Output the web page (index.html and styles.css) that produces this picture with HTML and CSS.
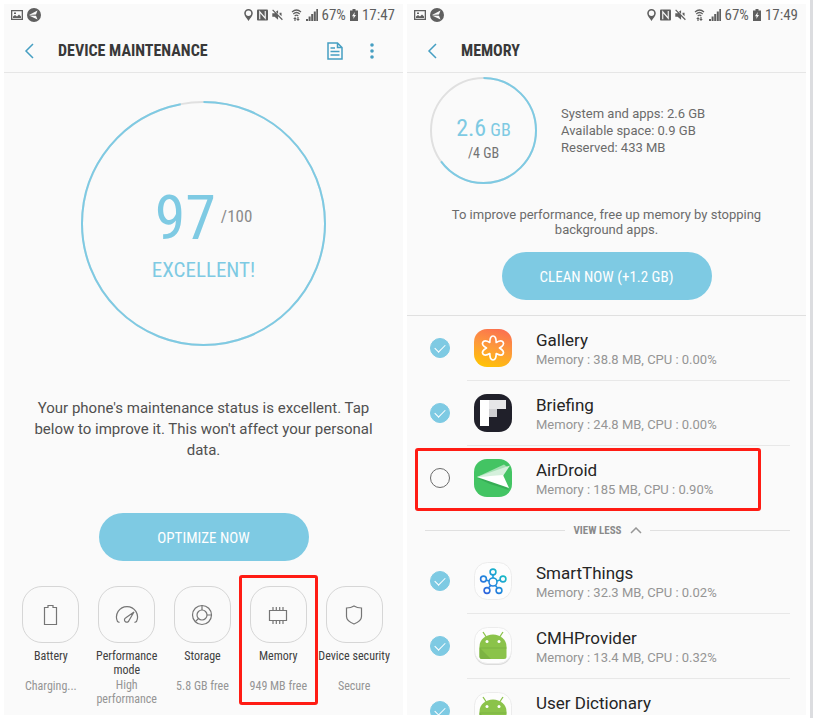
FILE: index.html
```html
<!DOCTYPE html>
<html lang="en">
<head>
    <meta charset="UTF-8">
    <title>Device maintenance</title>
    <link rel="stylesheet" href="styles.css">
</head>
<body>

<!-- shared icons -->
<svg class="sprite" aria-hidden="true">
    <symbol id="i-picture" viewBox="0 0 12 10">
        <path fill-rule="evenodd" d="M0 0h12v10H0z M1.300 1.300v7.400h9.400V1.300z"/>
        <path d="M2 8V6.500l2-1.500 2 1.500 2-2 2 2V8z"/>
        <path d="M3 2.500h2v1.500H3z"/>
    </symbol>
    <symbol id="i-send" viewBox="0 0 14 14">
        <circle cx="7" cy="7" r="7"/>
        <path d="M2 7l8.500-4.500L9 6.500z M2 7.500l7 .3 1.500 3.700z" fill="#fafafa"/>
    </symbol>
    <symbol id="i-pin" viewBox="0 0 9 12">
        <path fill-rule="evenodd" d="M4.500 0a4.300 4.300 0 0 1 4.300 4.300C8.800 7 6 9.500 4.500 12 3 9.500.2 7 .2 4.300A4.300 4.300 0 0 1 4.500 0z M4.500 1.600a2.700 2.700 0 1 0 0 5.400 2.700 2.700 0 0 0 0-5.400z"/>
    </symbol>
    <symbol id="i-nfc" viewBox="0 0 12 12">
        <rect width="12" height="12" rx="1"/>
        <path d="M3 10.500V2.500l6 7V1.500" fill="none" stroke="#fafafa" stroke-width="1.200"/>
    </symbol>
    <symbol id="i-mute" viewBox="2.500 2.500 19 19">
        <path d="M4.300 2.500L2.800 4 7.700 9H3v6h4l6 5v-5.700L19.700 21 21.200 19.500z M13 4L9.200 6.400 13 10.200z M15.500 8h3.500v6l-3.500-3.500z"/>
    </symbol>
    <symbol id="i-wifi" viewBox="0 0 11 12">
        <path d="M1 3q4.500-4 9 0 M2.300 5q3.200-3 6.400 0 M3.700 7q1.800-1.600 3.600 0" fill="none" stroke="#5f5f5f" stroke-width="1.200"/>
        <path d="M4 8l1.800 2H4.600v2H3.400v-2H2.200z M7 12L5.200 10h1.200V8h1.200v2h1.200z"/>
    </symbol>
    <symbol id="i-signal" viewBox="0 0 12 12">
        <path d="M0 10h2v2H0z M2.600 7.500h2V12h-2z M5.200 5h2v7h-2z M7.800 2.500h2V12h-2z M10.300 0H12v12h-1.700z"/>
    </symbol>
    <symbol id="i-charge" viewBox="0 0 8 12">
        <path d="M2.500 0h3v1.500H8V12H0V1.500h2.500z"/>
        <path d="M4.800 3L2 7.200h1.700L3.200 10 6 6H4.300z" fill="#fafafa"/>
    </symbol>
    <symbol id="i-back" viewBox="0 0 10 16">
        <path d="M9 1L2 8l7 7" fill="none" stroke="#469fc2" stroke-width="1.500"/>
    </symbol>
    <symbol id="i-android" viewBox="0 0 38 38">
        <rect x=".5" y="1.500" width="37" height="36.500" rx="13" fill="#dcdcdc"/>
        <rect x=".5" y=".5" width="37" height="36" rx="13" fill="#fdfdfd" stroke="#ececec"/>
        <path d="M9 5l4 6 M29 5l-4 6" stroke="#8bc34a" stroke-width="1.300"/>
        <path d="M5.500 19.500a13.500 12 0 0 1 27 0v10q0 2.500-2.500 2.500H8q-2.500 0-2.500-2.500z" fill="#8bc34a"/>
        <path d="M5.500 20.500h27v1h-27z M5.500 20.500L17 32H8q-2.500 0-2.500-2z" fill="#7cb342"/>
        <circle cx="13" cy="14.500" r="1.500" fill="#fff"/>
        <circle cx="25" cy="14.500" r="1.500" fill="#fff"/>
    </symbol>
</svg>

<main class="screens">
    <section class="screen">
        <div class="status">
            <svg class="ico-picture"><use href="#i-picture"/></svg>
            <svg class="ico-send"><use href="#i-send"/></svg>
            <span class="space"></span>
            <svg class="ico-pin"><use href="#i-pin"/></svg>
            <svg class="ico-small"><use href="#i-nfc"/></svg>
            <svg class="ico-small ico-mute"><use href="#i-mute"/></svg>
            <svg class="ico-small"><use href="#i-wifi"/></svg>
            <svg class="ico-signal"><use href="#i-signal"/></svg>
            <span>67%</span>
            <svg class="ico-charge"><use href="#i-charge"/></svg>
            <span>17:47</span>
        </div>
        <header class="bar">
            <button class="icon-btn" aria-label="Back"><svg class="ico-back"><use href="#i-back"/></svg></button>
            <h1>DEVICE MAINTENANCE</h1>
            <button class="icon-btn" aria-label="Report">
                <svg width="16" height="18" viewBox="0 0 16 18" fill="none" stroke="#469fc2" stroke-width="1.500">
                    <path d="M1 1h9.500L15 5.500V17H1z M10.500 1v4.500H15 M3.500 6H8 M3.500 9.500h9 M3.500 13h9"/>
                </svg>
            </button>
            <button class="icon-btn" aria-label="More options">
                <svg width="4" height="16" viewBox="0 0 4 16" fill="#469fc2">
                    <circle cx="2" cy="2" r="1.800"/><circle cx="2" cy="8" r="1.800"/><circle cx="2" cy="14" r="1.800"/>
                </svg>
            </button>
        </header>

        <div class="ring ring-big">
            <svg viewBox="0 0 245 245">
                <circle class="track" cx="122.500" cy="122.500" r="121.500"/>
                <circle class="value" cx="122.500" cy="122.500" r="121.500" pathLength="100" stroke-dasharray="97 3"/>
            </svg>
            <div class="ring-text">
                <div class="score"><span class="score-num">97</span><span class="score-max">/100</span></div>
                <div class="score-word">EXCELLENT!</div>
            </div>
        </div>

        <p class="message">Your phone's maintenance status is excellent. Tap below to improve it. This won't affect your personal data.</p>
        <button class="pill">OPTIMIZE NOW</button>

        <nav class="tiles">
            <a class="tile" href="#battery">
                <span class="tile-icon">
                    <svg viewBox="0 0 24 24"><path d="M5.500 4.500H9v-2h5v2h3.500v17h-12z"/></svg>
                </span>
                <span class="tile-name">Battery</span>
                <span class="tile-info">Charging...</span>
            </a>
            <a class="tile" href="#performance">
                <span class="tile-icon">
                    <svg viewBox="0 0 24 24"><path d="M4.500 19.500L2.500 18.500A10.500 10.500 0 1 1 21.500 18.500L19.500 19.500 M19 9l-5 8.500a2.300 2.300 0 1 1-3.500-2.500z"/></svg>
                </span>
                <span class="tile-name">Performance mode</span>
                <span class="tile-info">High performance</span>
            </a>
            <a class="tile" href="#storage">
                <span class="tile-icon">
                    <svg viewBox="0 0 24 24"><circle cx="12" cy="12" r="9.500"/><circle cx="12" cy="12" r="5"/><path d="M12 2.500V7 M17 12h4.500 M8.500 15.500L5.300 18.700"/></svg>
                </span>
                <span class="tile-name">Storage</span>
                <span class="tile-info">5.8 GB free</span>
            </a>
            <a class="tile marked" href="#memory">
                <span class="tile-icon">
                    <svg viewBox="0 0 24 24"><path d="M3.500 7.500h17v10h-17z M7 4v3.500 M10.300 4v3.500 M13.700 4v3.500 M17 4v3.500 M7 17.500V21 M10.300 17.500V21 M13.700 17.500V21 M17 17.500V21"/></svg>
                </span>
                <span class="tile-name">Memory</span>
                <span class="tile-info">949 MB free</span>
            </a>
            <a class="tile" href="#security">
                <span class="tile-icon">
                    <svg viewBox="0 0 24 24"><path d="M12 3q3 2 7.500 2v8.500q0 4.500-7.500 7.500-7.500-3-7.500-7.500V5Q9 5 12 3z"/></svg>
                </span>
                <span class="tile-name">Device security</span>
                <span class="tile-info">Secure</span>
            </a>
        </nav>
    </section>

    <section class="screen">
        <div class="status">
            <svg class="ico-picture"><use href="#i-picture"/></svg>
            <svg class="ico-send"><use href="#i-send"/></svg>
            <span class="space"></span>
            <svg class="ico-pin"><use href="#i-pin"/></svg>
            <svg class="ico-small"><use href="#i-nfc"/></svg>
            <svg class="ico-small ico-mute"><use href="#i-mute"/></svg>
            <svg class="ico-small"><use href="#i-wifi"/></svg>
            <svg class="ico-signal"><use href="#i-signal"/></svg>
            <span>67%</span>
            <svg class="ico-charge"><use href="#i-charge"/></svg>
            <span>17:49</span>
        </div>
        <header class="bar">
            <button class="icon-btn" aria-label="Back"><svg class="ico-back"><use href="#i-back"/></svg></button>
            <h1>MEMORY</h1>
        </header>

        <div class="summary">
            <div class="ring ring-small">
                <svg viewBox="0 0 107 107">
                    <circle class="track" cx="53.500" cy="53.500" r="52.500"/>
                    <circle class="value" cx="53.500" cy="53.500" r="52.500" pathLength="100" stroke-dasharray="65 35"/>
                </svg>
                <div class="ring-text">
                    <div class="used"><span class="used-num">2.6</span> GB</div>
                    <div class="total">/4 GB</div>
                </div>
            </div>
            <ul class="stats">
                <li>System and apps: 2.6 GB</li>
                <li>Available space: 0.9 GB</li>
                <li>Reserved: 433 MB</li>
            </ul>
        </div>
        <p class="hint">To improve performance, free up memory by stopping background apps.</p>
        <button class="pill">CLEAN NOW (+1.2 GB)</button>

        <div class="apps">
            <label class="app">
                <input type="checkbox" checked>
                <svg class="app-icon" viewBox="0 0 38 38">
                    <defs>
                        <linearGradient id="g-gallery" x1=".7" y1="0" x2=".4" y2="1">
                            <stop offset="0" stop-color="#fb7050"/><stop offset=".5" stop-color="#fd9a3a"/><stop offset="1" stop-color="#ffc107"/>
                        </linearGradient>
                    </defs>
                    <rect width="38" height="38" rx="13" fill="url(#g-gallery)"/>
                    <path fill="none" stroke="#fff" stroke-width="1.700" stroke-linejoin="round" d="M15.800 13.400C15.800 9.500 17 7 19 7S22.200 9.500 22.200 13.400C25.600 11.400 28.200 11.500 29.200 13.200S28.900 17 25.500 19C28.900 21 30.200 23.100 29.200 24.800S25.600 26.600 22.200 24.600C22.200 28.500 21 31 19 31S15.800 28.500 15.800 24.600C12.400 26.600 9.800 26.500 8.800 24.800S9.100 21 12.500 19C9.100 17 7.800 14.900 8.800 13.200S12.400 11.400 15.800 13.400z"/>
                </svg>
                <span class="app-text"><span class="app-name">Gallery</span><span class="app-info">Memory : 38.8 MB, CPU : 0.00%</span></span>
            </label>
            <label class="app">
                <input type="checkbox" checked>
                <svg class="app-icon" viewBox="0 0 38 38">
                    <rect width="38" height="38" rx="13" fill="#20202a"/>
                    <path d="M6 6h9v26H6z" fill="#fff"/>
                    <path d="M15 6h17v9H15z" fill="#e6e6e8"/>
                    <path d="M15 15h8v8h-8z" fill="#cfcfd2"/>
                </svg>
                <span class="app-text"><span class="app-name">Briefing</span><span class="app-info">Memory : 24.8 MB, CPU : 0.00%</span></span>
            </label>
            <label class="app marked">
                <input type="checkbox">
                <svg class="app-icon" viewBox="0 0 38 38">
                    <rect width="38" height="38" rx="13" fill="#43c463"/>
                    <path d="M3 19l13 6 19 6-7-8z" fill="#37ad55"/>
                    <path d="M3 18L30 5.500l4 3L28 17z" fill="#a5e0b4"/>
                    <path d="M3 18L36 6.500 29 17z" fill="#d5f0dc"/>
                    <path d="M3 18l26-2 6 13z" fill="#fff"/>
                </svg>
                <span class="app-text"><span class="app-name">AirDroid</span><span class="app-info">Memory : 185 MB, CPU : 0.90%</span></span>
            </label>

            <button class="less">
                <span>VIEW LESS</span>
                <svg width="12" height="7" viewBox="0 0 12 7" fill="none" stroke="#979797" stroke-width="1.500"><path d="M1 6l5-5 5 5"/></svg>
            </button>

            <label class="app">
                <input type="checkbox" checked>
                <svg class="app-icon" viewBox="0 0 38 38">
                    <defs>
                        <linearGradient id="g-things" gradientUnits="userSpaceOnUse" x1="10" y1="30" x2="30" y2="10">
                            <stop offset="0" stop-color="#2f62dd"/><stop offset=".5" stop-color="#1e8fdc"/><stop offset="1" stop-color="#17c3c0"/>
                        </linearGradient>
                    </defs>
                    <rect x=".5" y=".5" width="37" height="37" rx="13" fill="#fdfdfd" stroke="#ececec"/>
                    <g fill="none" stroke="url(#g-things)" stroke-width="1.600">
                        <circle cx="19" cy="20" r="4"/>
                        <circle cx="19" cy="10" r="2.900"/>
                        <circle cx="29" cy="17" r="2.900"/>
                        <circle cx="25" cy="28.500" r="2.900"/>
                        <circle cx="13" cy="28.500" r="2.900"/>
                        <circle cx="9.500" cy="17" r="2.900"/>
                        <path d="M19 13v3 M23 19l3-1 M21.500 23.500l1.500 2 M16.500 23.500l-1.500 2 M15 19l-3-1"/>
                    </g>
                </svg>
                <span class="app-text"><span class="app-name">SmartThings</span><span class="app-info">Memory : 32.3 MB, CPU : 0.02%</span></span>
            </label>
            <label class="app">
                <input type="checkbox" checked>
                <svg class="app-icon"><use href="#i-android"/></svg>
                <span class="app-text"><span class="app-name">CMHProvider</span><span class="app-info">Memory : 13.4 MB, CPU : 0.32%</span></span>
            </label>
            <label class="app">
                <input type="checkbox" checked>
                <svg class="app-icon"><use href="#i-android"/></svg>
                <span class="app-text"><span class="app-name">User Dictionary</span></span>
            </label>
        </div>
    </section>
</main>
</body>
</html>
```
FILE: styles.css
```css
* {
    margin: 0;
    padding: 0;
    box-sizing: border-box;
}
body {
    background: #ffffff;
    color: #505050;
    font-family: Roboto, "Liberation Sans", sans-serif;
    font-size: 13px;
}
button {
    border: none;
    background: none;
    font: inherit;
    color: inherit;
    cursor: pointer;
}
a {
    color: inherit;
    text-decoration: none;
}
ul {
    list-style: none;
}
.sprite {
    display: none;
}

/* two phones side by side */
.screens {
    display: grid;
    grid-template-columns: 1fr 1fr;
    gap: 4px;
    height: 100vh;
    padding: 4px 4px 3px;
    border-right: 3px solid #dcdde0;
}
.screen {
    display: flex;
    flex-direction: column;
    min-width: 0;
    overflow: hidden;
    background: #fafafa;
}

/* condensed texts */
.status,
.bar,
.ring,
.pill,
.tiles,
.less {
    font-family: "Roboto Condensed", "Liberation Sans Narrow", "Liberation Sans", sans-serif;
}

/* status bar */
.status {
    display: flex;
    flex: none;
    align-items: center;
    gap: 4px;
    height: 22px;
    padding: 0 8px 0 7px;
    font-size: 15px;
    color: #5f5f5f;
    fill: #5f5f5f;
}
.space {
    flex: 1;
}
.ico-picture {
    width: 12px;
    height: 10px;
}
.ico-send {
    width: 14px;
    height: 14px;
}
.ico-pin {
    width: 9px;
    height: 12px;
}
.ico-small {
    width: 11px;
    height: 12px;
}
.ico-signal {
    width: 12px;
    height: 12px;
}
.ico-mute {
    margin-right: 4px;
}
.ico-charge {
    width: 8px;
    height: 12px;
}

/* title bar */
.bar {
    display: flex;
    flex: none;
    align-items: center;
    height: 47px;
    padding: 3px 17px 0 11px;
    border-bottom: 1px solid #e6e6e6;
}
.bar h1 {
    flex: 1;
    padding-left: 15px;
    font-size: 16px;
    font-weight: bold;
    color: #383838;
}
.icon-btn {
    display: flex;
    align-items: center;
    justify-content: center;
    width: 28px;
    height: 36px;
}
.icon-btn + .icon-btn {
    margin-left: 9px;
}
.ico-back {
    width: 10px;
    height: 16px;
}

/* rings */
.ring {
    position: relative;
    flex: none;
}
.ring svg {
    display: block;
    transform: rotate(-90deg);
}
.ring circle {
    fill: none;
    stroke-width: 2;
}
.track {
    stroke: #e0e0e0;
}
.value {
    stroke: #7ecae3;
}
.ring-text {
    position: absolute;
    inset: 0;
    text-align: center;
    color: #7ecae3;
}
.ring-big {
    width: 245px;
    margin: 28px auto 0;
}
.ring-big .ring-text {
    padding-top: 82px;
}
.score {
    display: flex;
    justify-content: center;
    gap: 5px;
}
.score-num {
    font-size: 62px;
    line-height: 70px;
}
.score-max {
    padding-top: 22px;
    font-size: 17px;
    line-height: 22px;
    color: #8a8a8a;
}
.score-word {
    padding-top: 5px;
    font-size: 21px;
    line-height: 24px;
}
.ring-small {
    width: 107px;
}
.ring-small .ring-text {
    padding-top: 37px;
}
.used {
    font-size: 18px;
    line-height: 28px;
}
.used-num {
    font-size: 24px;
}
.total {
    font-size: 14px;
    line-height: 18px;
    color: #737373;
}

.message {
    padding: 52px 30px 0;
    font-size: 15px;
    line-height: 21px;
    text-align: center;
}
.pill {
    flex: none;
    width: 210px;
    height: 48px;
    margin: 52px auto 0;
    padding-top: 2px;
    border-radius: 24px;
    background: #7ecae3;
    color: #ffffff;
    font-size: 15px;
}

/* tiles */
.tiles {
    display: grid;
    grid-template-columns: repeat(5, 1fr);
    padding: 25px 11px 0 9px;
    font-size: 12px;
    line-height: 14px;
    text-align: center;
}
.tile {
    position: relative;
    display: flex;
    flex-direction: column;
    align-items: center;
    min-width: 0;
    height: 120px;
}
.tile-icon {
    display: flex;
    flex: none;
    align-items: center;
    justify-content: center;
    width: 57px;
    height: 57px;
    margin-bottom: 6px;
    border: 1px solid #d6d6d6;
    border-radius: 20px;
}
.tile-icon svg {
    width: 24px;
    height: 24px;
    fill: none;
    stroke: #757575;
    stroke-width: 1.2;
}
.tile-name {
    height: 30px;
    color: #404040;
}
.tile-info {
    color: #959595;
}
.tile:last-child .tile-name {
    white-space: nowrap;
}
.marked::after {
    content: '';
    position: absolute;
    border: 3px solid #ff1c14;
    border-radius: 3px;
}
.tile.marked::after {
    inset: -11px -2px 1px -1px;
}

/* memory screen */
.summary {
    display: flex;
    flex: none;
    gap: 24px;
    padding: 4px 23px 0;
}
.stats {
    padding-top: 28px;
    line-height: 17px;
    color: #6b6b6b;
}
.hint {
    padding: 23px 44px 0;
    line-height: 15px;
    text-align: center;
    color: #6b6b6b;
}
.hint + .pill {
    margin-top: 15px;
}
.apps {
    margin-top: 15px;
    border-top: 1px solid #e0e0e0;
}
.app {
    position: relative;
    display: grid;
    grid-template-columns: 20px 38px 1fr;
    align-items: center;
    height: 65px;
    padding: 0 0 2px 23px;
    column-gap: 24px;
    background: linear-gradient(#e8e8e8, #e8e8e8) no-repeat 60px 100% / calc(100% - 76px) 1px;
}
.app.marked {
    background: none;
}
.app.marked::after {
    inset: 2px 45px 0 8px;
}
.app input {
    appearance: none;
    display: flex;
    justify-content: center;
    width: 20px;
    height: 20px;
    border: 1px solid #6b6b6b;
    border-radius: 50%;
}
.app input:checked {
    border-color: #7ecae3;
    background: #7ecae3;
}
.app input:checked::after {
    content: '';
    width: 5px;
    height: 9px;
    margin-top: 3px;
    border: solid #ffffff;
    border-width: 0 1px 1px 0;
    transform: rotate(45deg);
}
.app-icon {
    width: 38px;
    height: 38px;
}
.app-text {
    display: grid;
    align-content: start;
    height: 42px;
    padding-top: 2px;
}
.app-name {
    font-size: 17px;
    line-height: 22px;
    color: #252525;
}
.app-info {
    line-height: 18px;
    color: #959595;
}
.less {
    display: flex;
    align-items: center;
    gap: 8px;
    width: 100%;
    height: 38px;
    padding: 0 16px 0 18px;
    font-size: 11px;
    font-weight: bold;
    color: #8a8a8a;
}
.less::before,
.less::after {
    content: '';
    flex: 1;
    height: 1px;
    background: #e0e0e0;
}
```
